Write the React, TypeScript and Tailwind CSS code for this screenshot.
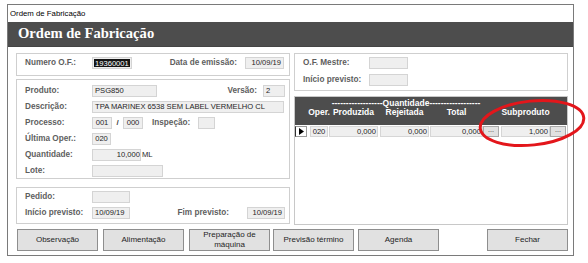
import React from 'react';

const SANS = "font-['Liberation_Sans',Arial,sans-serif]";

function Label({ children, className = '' }: { children: React.ReactNode; className?: string }) {
  return (
    <span className={`text-[8.2px] leading-[12px] font-bold text-[#5e5e5e] whitespace-nowrap shrink-0 ${className}`}>
      {children}
    </span>
  );
}

function Field({ children, className = '' }: { children?: React.ReactNode; className?: string }) {
  return (
    <div
      className={`h-[12px] shrink-0 border border-[#d4d4d4] bg-[#efefef] text-[7.6px] leading-[10px] text-[#1e1e1e] px-[2px] whitespace-nowrap overflow-hidden ${className}`}
    >
      {children}
    </div>
  );
}

function Row({ children }: { children: React.ReactNode }) {
  return <div className="flex items-center h-[12px]">{children}</div>;
}

function Cell({ children, className = '' }: { children?: React.ReactNode; className?: string }) {
  return (
    <div
      className={`h-[11px] shrink-0 border border-[#d6d6d6] bg-[#efefef] text-[7.6px] leading-[9px] text-[#1e1e1e] text-right pr-[1px] ${className}`}
    >
      {children}
    </div>
  );
}

function DotsBtn() {
  return (
    <div className="h-[11px] w-[16px] shrink-0 border border-[#a8a8a8] bg-[#e1e1e1] text-[7px] leading-[6px] text-center text-[#333]">
      ...
    </div>
  );
}

function Button({ children, className = '' }: { children: React.ReactNode; className?: string }) {
  return (
    <div
      className={`w-[81px] h-[22px] shrink-0 border border-[#8e8e8e] bg-[#e1e1e1] flex items-center justify-center text-center text-[8px] leading-[10px] text-[#1e1e1e] ${className}`}
    >
      {children}
    </div>
  );
}

export default function App() {
  return (
    <div className={`w-[588px] h-[263px] bg-white relative pt-[4px] pl-[7px] overflow-hidden ${SANS}`}>
      <div className="w-[567px] h-[252px] border border-[#7a7a7a] flex flex-col bg-white">
        {/* title bar */}
        <div className="h-[17px] pl-[2px] text-[7.8px] leading-[17px] text-black">Ordem de Fabricação</div>

        {/* header */}
        <div className="h-[25px] bg-[#4d4d4d] border-b border-[#444] pl-[10px] flex items-center">
          <span className="font-['Liberation_Serif',serif] font-bold text-[14.6px] text-white">
            Ordem de Fabricação
          </span>
        </div>

        <div className="flex pt-[6px] pl-[8px]">
          {/* left column */}
          <div className="w-[274px] flex flex-col">
            <div className="h-[23px] border border-[#cfcfcf] pl-[8px] pr-[5px] pt-[3px] flex items-start">
              <Label className="w-[67px]">Numero O.F.:</Label>
              <Field className="w-[40px] !p-[1px]">
                <span className="block h-full bg-[#141414] text-white leading-[9px] pl-[1px]">19360001</span>
              </Field>
              <div className="flex-1" />
              <Label>Data de emissão:</Label>
              <Field className="ml-[8px] w-[39px] text-right">10/09/19</Field>
            </div>

            <div className="mt-[3px] h-[100px] border border-[#cfcfcf] pl-[8px] pr-[4px] pt-[5px] flex flex-col gap-[4px]">
              <Row>
                <Label className="w-[67px]">Produto:</Label>
                <Field className="w-[65px]">PSG850</Field>
                <div className="flex-1" />
                <Label>Versão:</Label>
                <Field className="ml-[6px] w-[22px]">2</Field>
              </Row>
              <Row>
                <Label className="w-[67px]">Descrição:</Label>
                <Field className="w-[192px]">TPA MARINEX 6538 SEM LABEL VERMELHO CL</Field>
              </Row>
              <Row>
                <Label className="w-[67px]">Processo:</Label>
                <Field className="w-[20px] text-center !px-0">001</Field>
                <span className="w-[11px] text-center text-[8px] font-bold text-[#444]">/</span>
                <Field className="w-[20px] text-center !px-0">000</Field>
                <Label className="ml-[9px]">Inspeção:</Label>
                <Field className="ml-[8px] w-[17px]" />
              </Row>
              <Row>
                <Label className="w-[67px]">Última Oper.:</Label>
                <Field className="w-[19px] text-center !px-0">020</Field>
              </Row>
              <Row>
                <Label className="w-[67px]">Quantidade:</Label>
                <Field className="w-[49px] text-right !pr-0">10,000</Field>
                <span className="ml-[1px] text-[7.6px] text-[#1e1e1e]">ML</span>
              </Row>
              <Row>
                <Label className="w-[67px]">Lote:</Label>
                <Field className="w-[71px]" />
              </Row>
            </div>

            <div className="mt-[8px] h-[37px] border border-[#cfcfcf] pl-[8px] pr-[4px] pt-[3px] flex flex-col gap-[4px]">
              <Row>
                <Label className="w-[67px]">Pedido:</Label>
                <Field className="w-[38px]" />
              </Row>
              <Row>
                <Label className="w-[67px]">Início previsto:</Label>
                <Field className="w-[38px]">10/09/19</Field>
                <div className="flex-1" />
                <Label>Fim previsto:</Label>
                <Field className="ml-[18px] w-[38px] text-right">10/09/19</Field>
              </Row>
            </div>
          </div>

          {/* right column */}
          <div className="ml-[4px] w-[274px] flex flex-col">
            <div className="h-[38px] border border-[#cfcfcf] pl-[8px] pt-[3px] flex flex-col gap-[5px]">
              <Row>
                <Label className="w-[66px]">O.F. Mestre:</Label>
                <Field className="w-[39px]" />
              </Row>
              <Row>
                <Label className="w-[66px]">Início previsto:</Label>
                <Field className="w-[39px]" />
              </Row>
            </div>

            <div className="mt-[5px] h-[129px] border border-[#c8c8c8] bg-white">
              <div className="h-[28px] bg-[#4d4d4d] text-white font-bold text-[8.5px]">
                <div className="h-[10px] flex leading-[10px] pt-[1px]">
                  <div className="ml-[34px] w-[154px] flex justify-center whitespace-nowrap">
                    {'-'.repeat(18)}Quantidade{'-'.repeat(18)}
                  </div>
                </div>
                <div className="h-[10px] flex leading-[10px] whitespace-nowrap">
                  <span className="w-[12px] shrink-0" />
                  <span className="ml-[3px] w-[18px] shrink-0 flex justify-center">Oper.</span>
                  <span className="ml-[1px] w-[49px] shrink-0 text-center">Produzida</span>
                  <span className="ml-[2px] w-[49px] shrink-0 text-center">Rejeitada</span>
                  <span className="ml-[1px] w-[53px] shrink-0 text-center">Total</span>
                  <span className="w-[16px] shrink-0" />
                  <span className="ml-[2px] w-[49px] shrink-0 text-center">Subproduto</span>
                </div>
              </div>
              <div className="h-[13px] pt-[1px] flex">
                <div className="w-[12px] h-[11px] shrink-0 bg-white border border-[#9a9a9a] border-l-[#333] flex items-center justify-center">
                  <svg width="5" height="7" viewBox="0 0 5 7">
                    <path d="M0 0 L5 3.5 L0 7 Z" fill="#000" />
                  </svg>
                </div>
                <Cell className="ml-[3px] w-[18px] !text-center !pr-0">020</Cell>
                <Cell className="ml-[1px] w-[49px]">0,000</Cell>
                <Cell className="ml-[2px] w-[49px]">0,000</Cell>
                <Cell className="ml-[1px] w-[53px]">0,000</Cell>
                <DotsBtn />
                <Cell className="ml-[2px] w-[49px]">1,000</Cell>
                <DotsBtn />
              </div>
            </div>
          </div>
        </div>

        {/* buttons */}
        <div className="mt-[4px] flex pl-[9px] pr-[5px]">
          <Button>Observação</Button>
          <Button className="ml-[5px]">Alimentação</Button>
          <Button className="ml-[5px]">
            Preparação de
            <br />
            máquina
          </Button>
          <Button className="ml-[3px]">Previsão término</Button>
          <Button className="ml-[4px]">Agenda</Button>
          <Button className="ml-auto">Fechar</Button>
        </div>
      </div>

      {/* red annotation ellipse */}
      <svg className="absolute left-0 top-0 pointer-events-none" width="588" height="263">
        <ellipse
          cx="532"
          cy="123"
          rx="52"
          ry="22"
          transform="rotate(-6 532 123)"
          fill="none"
          stroke="#e3161b"
          strokeWidth="3"
        />
      </svg>
    </div>
  );
}
